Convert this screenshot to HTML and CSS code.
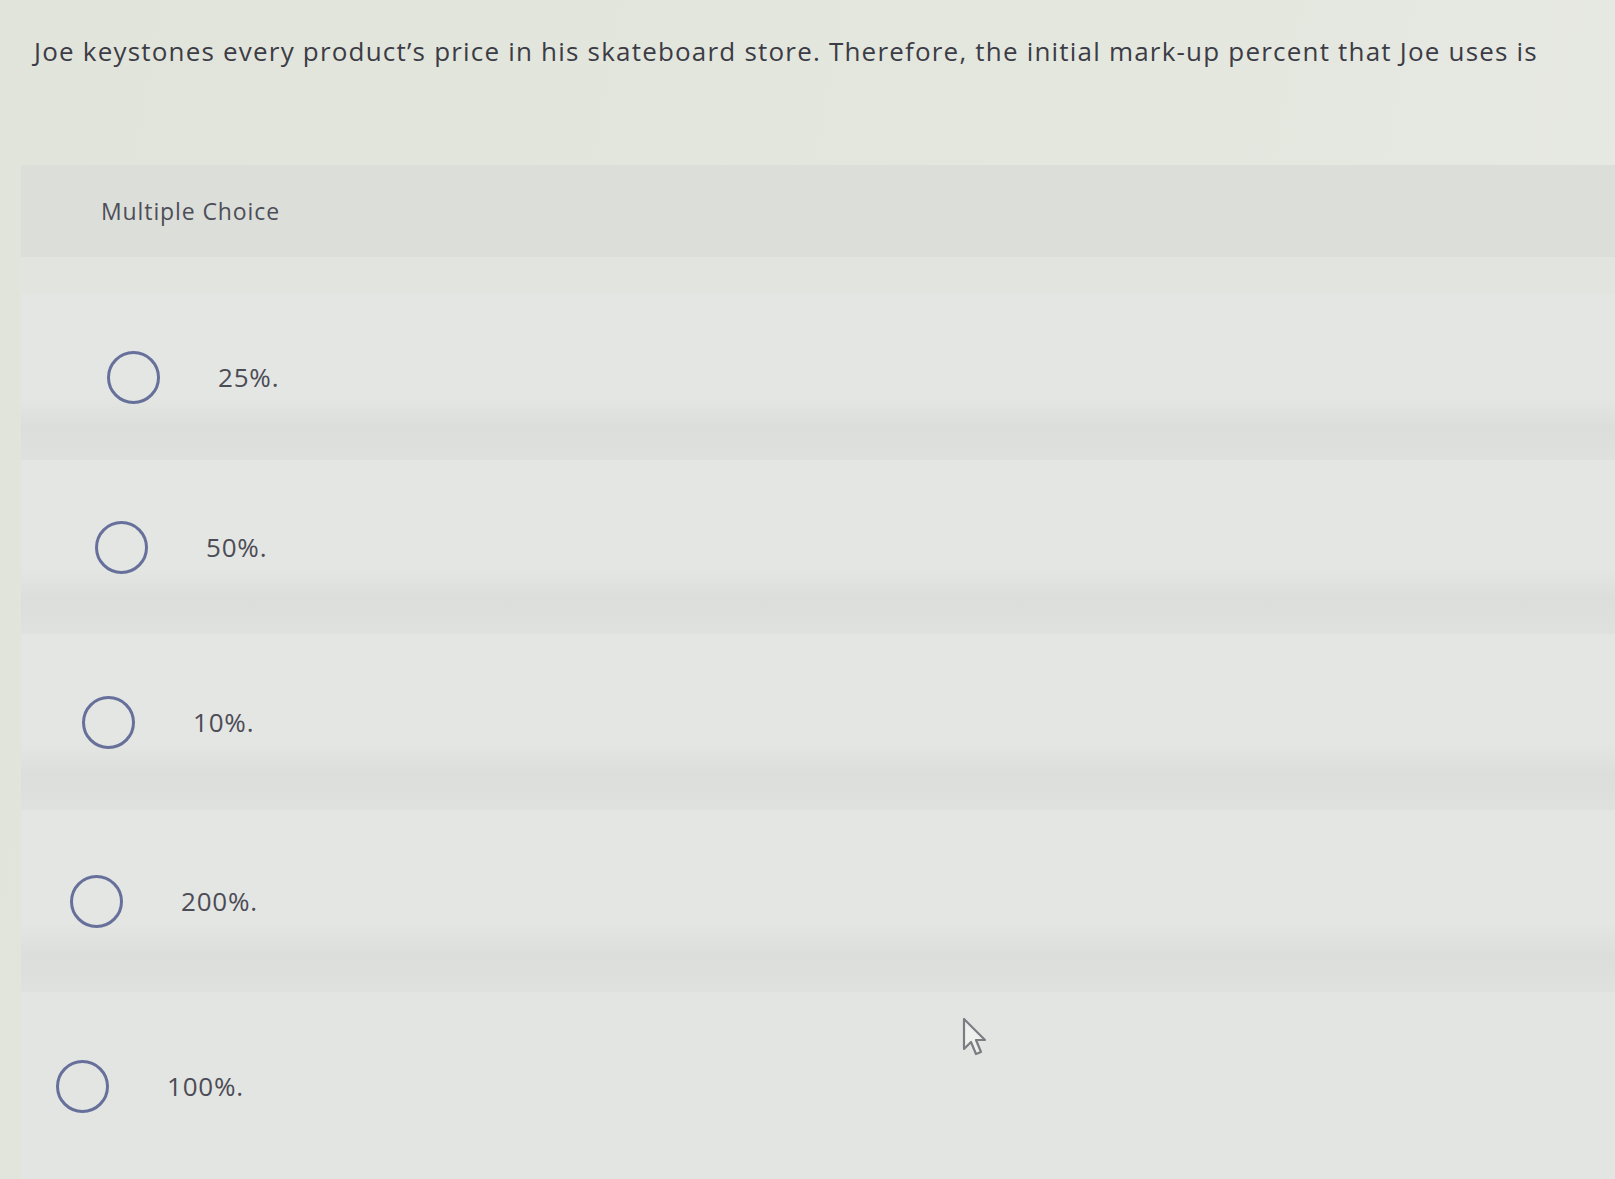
FILE: index.html
```html
<!DOCTYPE html>
<html>
<head>
<meta charset="utf-8">
<link rel="stylesheet" href="styles.css">
</head>
<body>
<div class="page">
  <p class="question">Joe keystones every product’s price in his skateboard store. Therefore, the initial mark-up percent that Joe uses is</p>
  <section class="panel">
    <div class="panel-head">Multiple Choice</div>
    <div class="options">
      <div class="option opt-1"><span class="radio"></span><span class="label">25%.</span></div>
      <div class="option opt-2"><span class="radio"></span><span class="label">50%.</span></div>
      <div class="option opt-3"><span class="radio"></span><span class="label">10%.</span></div>
      <div class="option opt-4"><span class="radio"></span><span class="label">200%.</span></div>
      <div class="option opt-5"><span class="radio"></span><span class="label">100%.</span></div>
    </div>
  </section>
  <svg class="cursor" width="28" height="42" viewBox="0 0 28 42">
    <path d="M3 3 L3 33 L10 26 L15 38 L20 36 L15 24 L24 24 Z" fill="#eef0ee" stroke="#7a7d82" stroke-width="2.2" stroke-linejoin="round"/>
  </svg>
</div>
</body>
</html>
```
FILE: styles.css
```css
* { box-sizing: border-box; }
html, body { margin: 0; padding: 0; }
body {
  background: #e3e6dd;
  font-family: "Open Sans", "Lato", sans-serif;
  width: 1615px;
  height: 1179px;
  overflow: hidden;
}
.page {
  position: relative;
  height: 1179px;
  background: linear-gradient(100deg, #e1e4da 0%, #e4e7de 60%, #e7e9e3 100%);
}
.question {
  margin: 0;
  padding: 34px 0 0 34px;
  font-size: 26px;
  line-height: 34px;
  letter-spacing: 1.2px;
  color: #3c3c46;
  white-space: nowrap;
}
.panel {
  margin: 97px 0 0 21px;
  background: #e2e4e0;
  height: 1014px;
}
.panel-head {
  height: 92px;
  display: flex;
  align-items: center;
  padding: 0 0 0 80px;
  background: #dcdeda;
  font-size: 23px;
  letter-spacing: 0.9px;
  color: #4e4e58;
}
.options {
  padding-top: 37px;
}
.option {
  display: flex;
  align-items: center;
  gap: 58px;
  background: linear-gradient(180deg, #e4e6e3 0%, #e4e6e3 62%, #dcdedb 80%, #dfe1de 100%);
}
.option:last-child {
  background: #e3e5e2;
}
.opt-1 { padding-left: 86px; height: 166px; }
.opt-2 { padding-left: 74px; height: 174px; }
.opt-3 { padding-left: 61px; height: 176px; }
.opt-4 { padding-left: 49px; height: 182px; }
.opt-5 { padding-left: 35px; height: 188px; }
.radio {
  width: 53px;
  height: 53px;
  border: 3px solid #66709a;
  border-radius: 50%;
  flex: none;
}
.label {
  font-size: 26px;
  letter-spacing: 0.8px;
  color: #4c4c56;
}
.cursor {
  position: absolute;
  left: 961px;
  top: 1016px;
}
```
